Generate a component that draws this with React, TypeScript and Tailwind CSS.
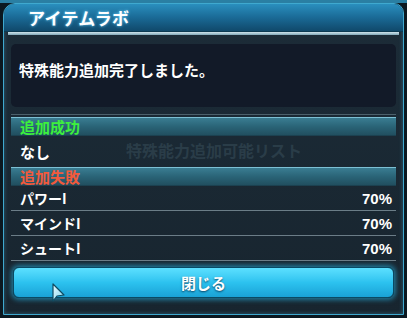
import React from "react";

const font = { fontFamily: '"Noto Sans CJK JP", "Noto Sans", sans-serif' };

function Row({ name, pct }: { name: string; pct: string }) {
  return (
    <div className="h-[25px] flex items-center justify-between pl-[9px] pr-[4px] border-b border-[#6b7d87]">
      <span className="text-[14px] font-bold text-white leading-none">{name}</span>
      <span className="text-[15px] font-bold text-white leading-none" style={{ fontFamily: '"Liberation Sans", Arial, sans-serif' }}>{pct}</span>
    </div>
  );
}

function Header({ label, color }: { label: string; color: string }) {
  return (
    <div className="h-[19px] flex items-center pl-[9px] border-t border-[#7cc0d4] border-b border-b-[#1c4150] bg-gradient-to-b from-[#3a7d92] via-[#2a6477] to-[#214f60]">
      <span className={`text-[15px] font-bold leading-none ${color}`}>{label}</span>
    </div>
  );
}

export default function App() {
  return (
    <div className="relative w-[407px] h-[318px] overflow-hidden bg-[#0b1820]" style={font}>
      <div className="absolute left-0 right-0 top-0 h-[3px] bg-[#2a7fa3]" />
      <div className="absolute left-[3px] right-[3px] top-[3px] bottom-[3px] rounded-tl-[12px] rounded-tr-[10px] border-[1.5px] border-[#3fa9cf] bg-gradient-to-b from-[#1c2c38] to-[#18252f] flex flex-col overflow-hidden shadow-[inset_0_0_4px_rgba(80,180,220,0.4)]">
        {/* title bar */}
        <div className="h-[28px] flex items-center pl-[24px] bg-gradient-to-b from-[#2a8fbe] via-[#1a6a96] to-[#10496b] border-b border-[#0c3a52]">
          <span className="text-[17px] font-bold text-white tracking-[0.3px] leading-none [text-shadow:0_0_3px_#6fd3ff]">アイテムラボ</span>
        </div>
        <div className="h-[3px] mx-[4px] bg-gradient-to-b from-[#d2e6ee] to-[#7fa6b6]" />
        {/* content */}
        <div className="flex-1 flex flex-col px-[7px] pt-[9px] relative">
          <div className="absolute left-[122px] top-[107px] text-[16px] font-bold text-[#4f6b78] opacity-30 leading-none">特殊能力追加可能リスト</div>
          <div className="h-[63px] rounded-[5px] bg-[#121a28] pl-[8px] pt-[13px] relative">
            <span className="text-[15px] font-bold text-white leading-none">特殊能力追加完了しました。</span>
          </div>
          <div className="mt-[7px] border-t border-[#4c616c]" />
          <div className="mt-[2px] relative">
            <Header label="追加成功" color="text-[#3df03d]" />
          </div>
          <div className="h-[31px] flex items-center pl-[9px] relative">
            <span className="text-[15px] font-bold text-white leading-none">なし</span>
          </div>
          <div className="relative">
            <Header label="追加失敗" color="text-[#f25a3c]" />
          </div>
          <div className="relative">
            <Row name="パワーI" pct="70%" />
            <Row name="マインドI" pct="70%" />
            <Row name="シュートI" pct="70%" />
          </div>
          <div className="mt-[6px] mx-[2px] h-[31px] rounded-[6px] border border-[#0a4a64] bg-gradient-to-b from-[#5be0ff] via-[#2cc2ef] to-[#1aa2d6] flex items-center justify-center shadow-[0_0_5px_2px_rgba(40,190,240,0.55)]">
            <span className="text-[15px] font-bold text-white leading-none [text-shadow:0_1px_2px_rgba(0,40,70,0.8)]">閉じる</span>
          </div>
        </div>
      </div>
      {/* cursor */}
      <svg className="absolute left-[52px] top-[283px]" width="14" height="20" viewBox="0 0 14 20">
        <defs>
          <linearGradient id="cg" x1="0" y1="0" x2="1" y2="1">
            <stop offset="0" stopColor="#e8fbff" />
            <stop offset="1" stopColor="#7fd6ee" />
          </linearGradient>
        </defs>
        <path d="M1 1 L1 18 L5 13 L12 12 Z" fill="url(#cg)" stroke="#0f4a60" strokeWidth="1.2" strokeLinejoin="round" />
      </svg>
    </div>
  );
}
